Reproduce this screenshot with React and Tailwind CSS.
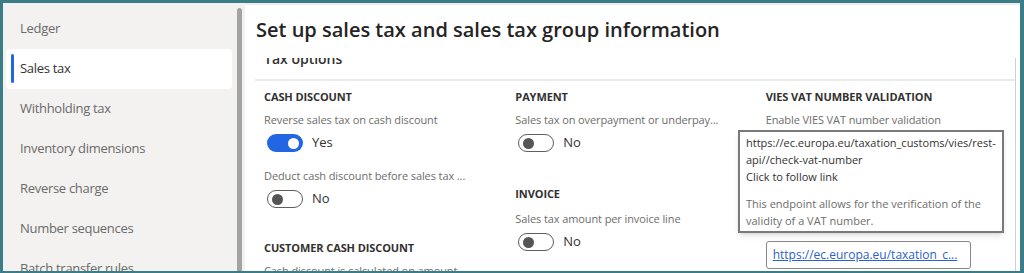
import React from 'react';

const navItems = [
  'Ledger',
  'Sales tax',
  'Withholding tax',
  'Inventory dimensions',
  'Reverse charge',
  'Number sequences',
  'Batch transfer rules',
];

const Toggle = ({ on, label }) => (
  <div className="flex items-center h-[26px] pl-[3px]">
    {on ? (
      <div className="w-[36px] h-[18px] rounded-full bg-[#2266e3] flex items-center justify-end pr-[4px]">
        <div className="w-[11px] h-[11px] rounded-full bg-white" />
      </div>
    ) : (
      <div className="w-[36px] h-[18px] rounded-full border border-[#605e5c] bg-white flex items-center pl-[4px]">
        <div className="w-[11px] h-[11px] rounded-full bg-[#555]" />
      </div>
    )}
    <span className="ml-[9px] text-[13px] text-[#323130]">{label}</span>
  </div>
);

const Heading = ({ children, className = '' }) => (
  <div className={`h-[20px] leading-[20px] text-[11px] tracking-[-0.1px] font-bold text-[#323130] whitespace-nowrap ${className}`}>
    {children}
  </div>
);

const Label = ({ children, className = '' }) => (
  <div className={`h-[20px] leading-[20px] text-[11px] tracking-[-0.1px] text-[#6e6d6b] whitespace-nowrap ${className}`}>
    {children}
  </div>
);

export default function App() {
  return (
    <div
      className="w-[1024px] h-[273px] bg-[#3b7d87] pt-[3px] pl-[3px] pr-[4px] pb-[2px] overflow-hidden"
      style={{ fontFamily: '"Open Sans", "Noto Sans", sans-serif' }}
    >
      <div className="flex h-full bg-white overflow-hidden">
        {/* Left navigation */}
        <div className="w-[242px] bg-[#f3f2f1] flex shrink-0">
          <div className="w-[229px] pt-[6px] pl-[3px]">
            {navItems.map((item) => {
              const selected = item === 'Sales tax';
              return (
                <div
                  key={item}
                  className={`relative h-[40px] flex items-center pl-[14px] text-[13px] tracking-[-0.3px] rounded-[4px] whitespace-nowrap ${
                    selected ? 'bg-white text-[#323130]' : 'text-[#6b6a68]'
                  }`}
                >
                  {selected && (
                    <div className="absolute left-[5px] top-[5px] w-[3px] h-[29px] rounded-full bg-[#2266e3]" />
                  )}
                  {item}
                </div>
              );
            })}
          </div>
          <div className="w-[13px] pt-[5px] pl-[5px]">
            <div className="w-[5px] h-[300px] rounded-t-full bg-[#a3a3a3]" />
          </div>
        </div>

        {/* Main */}
        <div className="flex-1 flex flex-col border-t-2 border-[#ececec] min-w-0">
          <div className="h-[53px] shrink-0 pl-[11px] flex items-center">
            <h1 className="-mt-[3px] text-[20px] font-semibold text-[#252423] whitespace-nowrap">
              Set up sales tax and sales tax group information
            </h1>
          </div>
          <div className="flex-1 overflow-hidden flex">
            <div className="flex-1 pl-[10px] min-w-0">
              <div className="h-[21px] overflow-hidden">
                <div className="-mt-[9px] h-[20px] leading-[20px] text-[14px] font-semibold text-[#323130] pl-[9px]">Tax options</div>
              </div>
              <div className="h-[2px] bg-[#ebebeb]" />

              <div className="relative flex pl-[9px]">
                {/* Column 1 */}
                <div className="w-[254px] pt-[6px]">
                  <Heading>CASH DISCOUNT</Heading>
                  <Label className="mt-[3px]">Reverse sales tax on cash discount</Label>
                  <Toggle on label="Yes" />
                  <Label className="mt-[10px]">Deduct cash discount before sales tax ...</Label>
                  <Toggle label="No" />
                  <Heading className="mt-[26px]">CUSTOMER CASH DISCOUNT</Heading>
                  <Label className="mt-[3px]">Cash discount is calculated on amount ...</Label>
                </div>

                {/* Column 2 */}
                <div className="w-[253px] pt-[6px]">
                  <Heading>PAYMENT</Heading>
                  <Label className="mt-[3px]">Sales tax on overpayment or underpay...</Label>
                  <Toggle label="No" />
                  <Heading className="mt-[28px]">INVOICE</Heading>
                  <Label className="mt-[5px]">Sales tax amount per invoice line</Label>
                  <Toggle label="No" />
                </div>

                {/* Column 3 */}
                <div className="w-[252px] pt-[6px]">
                  <Heading>VIES VAT NUMBER VALIDATION</Heading>
                  <Label className="mt-[3px]">Enable VIES VAT number validation</Label>
                  <div className="mt-[111px] w-[205px] h-[28px] border border-[#8a8886] rounded-[3px] flex items-center pl-[6px]">
                    <span className="text-[12px] text-[#2b5fc9] underline whitespace-nowrap">
                      https://ec.europa.eu/taxation_c...
                    </span>
                  </div>
                </div>

                {/* Tooltip */}
                <div className="absolute left-[483px] top-[49px] w-[266px] h-[103px] bg-white border-2 border-[#7a7a7a] shadow-md px-[6px] pt-[2px] text-[11px] leading-[17px]">
                  <div className="text-[#323130]">https://ec.europa.eu/taxation_customs/vies/rest-</div>
                  <div className="text-[#323130]">api//check-vat-number</div>
                  <div className="text-[#323130]">Click to follow link</div>
                  <div className="mt-[10px] text-[#6e6d6b]">This endpoint allows for the verification of the</div>
                  <div className="text-[#6e6d6b]">validity of a VAT number.</div>
                </div>
              </div>
            </div>
            <div className="w-[1px] bg-[#d0d0d0]" />
            <div className="w-[4px]" />
          </div>
        </div>
      </div>
    </div>
  );
}
